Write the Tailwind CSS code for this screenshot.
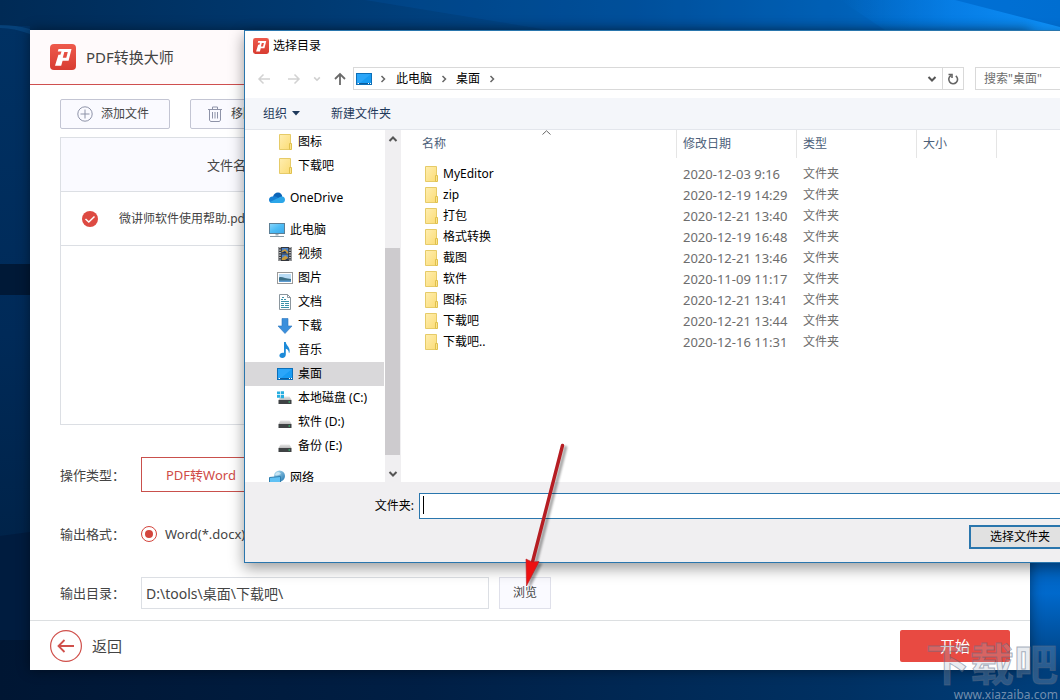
<!DOCTYPE html>
<html lang="zh-CN">
<head>
<meta charset="utf-8">
<meta name="viewport" content="width=device-width, initial-scale=1">
<title>PDF转换大师</title>
<script src="https://cdn.jsdelivr.net/npm/@tailwindcss/browser@4"></script>
</head>
<body class="relative h-screen overflow-hidden bg-[#002550] font-['Noto_Sans','Noto_Sans_CJK_SC',sans-serif] text-[12px] leading-[16px] text-[#444]">

<!-- shared icons -->
<svg class="absolute size-0" aria-hidden="true">
  <defs>
    <linearGradient id="gFolder" x1="0" y1="0" x2="1" y2="1"><stop offset="0" stop-color="#ffeeb0"/><stop offset="1" stop-color="#fbdc76"/></linearGradient>
    <linearGradient id="gLogo" x1="0" y1="0" x2="0" y2="1"><stop offset="0" stop-color="#ee5a4c"/><stop offset="1" stop-color="#d83c31"/></linearGradient>
    <linearGradient id="gScreen" x1="0" y1="0" x2="1" y2="1"><stop offset="0" stop-color="#8ad6fb"/><stop offset=".5" stop-color="#4dbcf5"/><stop offset="1" stop-color="#3aa8ea"/></linearGradient>
    <linearGradient id="gDisk" x1="0" y1="0" x2="0" y2="1"><stop offset="0" stop-color="#e6e6e6"/><stop offset="1" stop-color="#bcbcbc"/></linearGradient>
    <linearGradient id="gGlobe" x1="0" y1="0" x2="1" y2="1"><stop offset="0" stop-color="#b8e3f5"/><stop offset="1" stop-color="#2277b0"/></linearGradient>
  </defs>
  <symbol id="logo" viewBox="0 0 26 26">
    <rect width="26" height="26" rx="4" fill="url(#gLogo)"/>
    <path d="M8.500 5H21.500L18.600 16.800H12.600L11.200 21.800H5L8.400 10.800H10.400L11.500 7.600H7.800ZM12.800 13.800H16.300L17.800 8H14.300Z" fill="#fff" fill-rule="evenodd"/>
  </symbol>
  <symbol id="folder" viewBox="0 0 16 16">
    <path d="M2.500.500H13.500V15.500H2.500Z" fill="url(#gFolder)" stroke="#e6cb68"/>
    <path d="M12.500 9.500H14.500V15.500H12.500Z" fill="#fbe48e" stroke="#e0c04c"/>
  </symbol>
  <symbol id="onedrive" viewBox="0 0 16 16">
    <path d="M4 7C4.500 4 6.500 2.500 9 2.500C11.500 2.500 13 4.500 13.300 6.500L9 10Z" fill="#0a64b8"/>
    <path d="M3.500 6.500C6 5.700 8 7 9.500 8L6 13H3.500C1 13 0 11.500 0 9.800C0 8 1.300 6.700 3.500 6.500Z" fill="#1680d4"/>
    <path d="M13 6.500C15 6.600 16 8 16 9.800C16 11.800 14.800 13 13 13H3.500C2.500 13 1.500 12.600 1 12L10 7.500C11 6.800 12 6.500 13 6.500Z" fill="#2ca6e8"/>
  </symbol>
  <symbol id="pc" viewBox="0 0 16 16">
    <rect x=".5" y="1.500" width="15" height="10" fill="url(#gScreen)" stroke="#5d7f95"/>
    <path d="M6.500 12H9.500V13.500H6.500Z" fill="#9eb0bb"/>
    <path d="M1 14.500H15" stroke="#8798a3"/>
  </symbol>
  <symbol id="video" viewBox="0 0 16 16">
    <rect x="1.500" y="1" width="13" height="14" fill="#33363b"/>
    <path d="M3 1V15M13 1V15" stroke="#e8e8e8" stroke-width="1.400" stroke-dasharray="1.300 1.200"/>
    <path d="M4.800 2H11.200V7.500H4.800ZM4.800 8.500H11.200V14H4.800Z" fill="#4d83c9"/>
    <path d="M4.800 5L8 3L11.200 6V7.500H4.800ZM5 12L8.500 9.500L11.200 12V14H4.800Z" fill="#c99b3a"/>
    <path d="M4.800 6.500L8 5L10 7.500H4.800ZM8 14L11.200 12V14Z" fill="#16336a"/>
  </symbol>
  <symbol id="image" viewBox="0 0 16 16">
    <rect x=".5" y="2.500" width="15" height="11" fill="#fff" stroke="#9a9a9a"/>
    <path d="M2 4H14V12H2Z" fill="#b9dcf5"/>
    <path d="M2 7.500C5 6 8 9 14 9V12H2Z" fill="#3c6f86"/><path d="M2 10.500H14V12H2Z" fill="#5e9cd0"/>
  </symbol>
  <symbol id="doc" viewBox="0 0 16 16">
    <path d="M2.500.500H10.500L13.500 3.500V15.500H2.500Z" fill="#fff" stroke="#8b969e"/>
    <path d="M10.500.500V3.500H13.500" fill="none" stroke="#8b969e"/>
    <path d="M4 5.500H6M7 5.500H9M4 7.500H12M8 9.500H12M4 9.500H7M4 11.500H7M8 11.500H12M4 13.500H12M5 3.500H7" stroke="#3c91a8"/>
  </symbol>
  <symbol id="down" viewBox="0 0 16 16">
    <path d="M5 .500H11V8H15L8 15.500L1 8H5Z" fill="#3a8fdc" stroke="#2b76bd" stroke-width=".6"/>
  </symbol>
  <symbol id="music" viewBox="0 0 16 16">
    <path d="M7 0H8.800C8.800 3.500 13.800 5 12.500 10.800H11.800C11.800 8.800 10.800 7.200 8.800 6.800V12.500C8.800 14.800 7.300 16 5.300 16C3.500 16 2.400 15 2.400 13.500C2.400 11.500 4.800 10.200 7 10.800Z" fill="#1c8ad8"/>
  </symbol>
  <symbol id="desktop" viewBox="0 0 16 16">
    <rect x=".5" y="2.500" width="15" height="11" fill="#189cf3" stroke="#0c6fb8"/>
    <path d="M1 3H15L4 12H1Z" fill="#3dafff" opacity=".5"/>
    <path d="M1 12.500H15" stroke="#0b5d9e"/><path d="M1.500 12.500H3M12 12.500H13M14 12.500H15" stroke="#fff"/>
  </symbol>
  <symbol id="disk" viewBox="0 0 16 16">
    <path d="M3.500 6.500H12.500L14.500 10H1.500Z" fill="url(#gDisk)"/>
    <rect x="1.500" y="10" width="13" height="4" fill="#3f4244"/><rect x="11.500" y="11.500" width="1.500" height="1" fill="#3be07c"/>
  </symbol>
  <symbol id="diskwin" viewBox="0 0 16 16">
    <use href="#disk"/>
    <path d="M0 1.500H3V4.300H0ZM3.700 1.300H7V4.300H3.700ZM0 5H3V7.800H0ZM3.700 5H7V8.200H3.700Z" fill="#27aee0"/>
  </symbol>
  <symbol id="network" viewBox="0 0 16 16">
    <circle cx="10.500" cy="6" r="5.500" fill="url(#gGlobe)"/>
    <path d="M7 3C9 1 11 2 12 4C10 5 8 6 6 5Z" fill="#e1f4fb" opacity=".7"/>
    <path d="M.5 7.500L11.500 6.500V13.500L.5 14.500Z" fill="#5fc1f4" stroke="#2e7fb0"/>
    <path d="M3 16H9" stroke="#8798a3"/>
  </symbol>
  <symbol id="chev" viewBox="0 0 10 10"><path d="M1.500 3L5 6.500L8.500 3" fill="none" stroke="currentColor" stroke-width="2"/></symbol>
  <symbol id="sep" viewBox="0 0 10 10"><path d="M3.500 2L6.500 5L3.500 8" fill="none" stroke="currentColor" stroke-width="1.500"/></symbol>
</svg>

<!-- desktop wallpaper -->
<svg class="absolute inset-0 size-full" viewBox="0 0 1060 700" preserveAspectRatio="none" aria-hidden="true">
  <defs>
    <linearGradient id="wTop"><stop offset="0" stop-color="#002a55"/><stop offset=".3" stop-color="#003a72"/><stop offset=".6" stop-color="#004c94"/><stop offset=".8" stop-color="#0062b8"/><stop offset=".9" stop-color="#0074dc"/><stop offset="1" stop-color="#0072d8"/></linearGradient>
    <linearGradient id="wLeft" x1="0" y1="0" x2="0" y2="1"><stop offset="0" stop-color="#003163"/><stop offset=".6" stop-color="#002a58"/><stop offset="1" stop-color="#002349"/></linearGradient>
    <linearGradient id="wBot"><stop offset="0" stop-color="#001633"/><stop offset=".4" stop-color="#001f45"/><stop offset=".8" stop-color="#003163"/><stop offset="1" stop-color="#003f7c"/></linearGradient>
    <linearGradient id="wRight" x1="0" y1="0" x2="0" y2="1"><stop offset="0" stop-color="#0060ba"/><stop offset=".3" stop-color="#0069cc"/><stop offset="1" stop-color="#003f7c"/></linearGradient>
    <linearGradient id="wRay"><stop offset="0" stop-color="#0a84f0" stop-opacity="0"/><stop offset="1" stop-color="#0f92fa"/></linearGradient>
  </defs>
  <rect width="1060" height="80" fill="url(#wTop)"/>
  <path d="M365 0L560 32H1060V0Z" fill="#0060b8" opacity=".2"/>
  <path d="M840 0H955L1060 27V40H900Z" fill="url(#wRay)"/>
  <rect y="26" width="30" height="514" fill="url(#wLeft)"/>
  <path d="M0 25Q16 25 30 29V34Q14 28 0 28Z" fill="#0a4c88" opacity=".6"/>
  <rect y="264" width="30" height="31" fill="#001937"/>
  <path d="M0 536L30 532V700H0Z" fill="#001c3f"/>
  <rect y="640" width="1060" height="60" fill="url(#wBot)"/>
  <rect x="1030" y="560" width="30" height="110" fill="url(#wRight)"/>
</svg>

<!-- main application window -->
<main class="absolute inset-[30px] flex flex-col bg-white shadow-[0_0_12px_rgba(0,0,0,0.45)]">
  <header class="flex h-[55px] shrink-0 items-center gap-2.5 border-b border-[#cf4f4f] bg-[#fffafb] px-5">
    <svg class="size-[26px]" aria-hidden="true"><use href="#logo"/></svg>
    <h1 class="text-[15px] leading-5">PDF转换大师</h1>
  </header>
  <div class="flex min-h-0 flex-1 flex-col px-[30px] pt-[14px] pb-[11px]">
    <div class="flex gap-5">
      <button class="flex h-[30px] w-[110px] items-center justify-center gap-2 rounded-xs border border-[#c3c5d3] bg-[#fafaff] pr-1">
        <svg class="size-4" viewBox="0 0 16 16" fill="none" stroke="#8e93a8" aria-hidden="true"><circle cx="8" cy="8" r="7.200"/><path d="M8 3.500V12.500M3.500 8H12.500"/></svg>
        添加文件
      </button>
      <button class="flex h-[30px] w-[110px] items-center justify-center gap-2 rounded-xs border border-[#c3c5d3] bg-[#fafaff] pr-1">
        <svg class="size-4" viewBox="0 0 16 16" fill="none" stroke="#8e93a8" aria-hidden="true"><path d="M1 3.500H15M5.500 3V1H10.500V3M2.500 4V14L3.500 15.500H12.500L13.500 14V4M5.500 6V12.500M8 6V12.500M10.500 6V12.500"/></svg>
        移除文件
      </button>
    </div>
    <div class="mt-2 min-h-0 flex-1 border border-[#dcdfe4]">
      <table class="w-full table-fixed border-separate border-spacing-0 text-left">
        <colgroup><col class="w-[58px]"><col class="w-[286px]"><col></colgroup>
        <thead>
          <tr class="h-[54px] bg-[#fafaff]">
            <th colspan="2" class="border-b border-[#dcdfe4] text-center text-[13px] font-normal">文件名称</th>
            <th class="border-b border-[#dcdfe4]"></th>
          </tr>
        </thead>
        <tbody>
          <tr class="h-[54px]">
            <td class="border-b border-[#dcdfe4]">
              <label class="relative ml-[21px] block size-4">
                <input type="checkbox" checked aria-label="选择文件" class="block size-4 appearance-none rounded-full bg-[#dd4a42]">
                <svg class="absolute inset-0 size-4" viewBox="0 0 16 16" fill="none" stroke="#fff" stroke-width="1.500" aria-hidden="true"><path d="M3.500 8L6.800 11L12.500 5.500"/></svg>
              </label>
            </td>
            <td class="border-b border-[#dcdfe4]">微讲师软件使用帮助.pdf</td>
            <td class="border-b border-[#dcdfe4]"></td>
          </tr>
        </tbody>
      </table>
    </div>
    <div class="mt-8 flex h-[35px] items-center text-[13px]">
      <span class="w-[81px]">操作类型：</span>
      <button class="h-full border border-[#c9504c] px-6 text-[#cf4b47]">PDF转Word</button>
    </div>
    <div class="mt-[26px] flex h-8 items-center text-[13px]">
      <span class="w-[81px]">输出格式：</span>
      <label class="flex items-center gap-2">
        <input type="radio" name="format" checked class="size-4 appearance-none rounded-full border border-[#d3453d] bg-[#d3453d] bg-clip-content p-[3px]">
        Word(*.docx)
      </label>
    </div>
    <div class="mt-[27px] flex h-8 items-center text-[13px]">
      <label for="outdir" class="w-[81px]">输出目录：</label>
      <input id="outdir" type="text" value="D:\tools\桌面\下载吧\" class="h-full w-[348px] border border-[#dcdfe4] px-1 text-[14px]">
      <button class="ml-2.5 h-full w-[52px] border border-[#dfe0ea] bg-[#fafaff] text-[12px]">浏览</button>
    </div>
  </div>
  <footer class="flex h-[50px] shrink-0 items-center justify-between border-t border-[#dcdfe1] px-5 text-[15px]">
    <button class="flex items-center gap-2.5">
      <svg class="size-8" viewBox="0 0 32 32" fill="none" stroke="#d0504b" aria-hidden="true"><circle cx="16" cy="16" r="15.400" stroke-width="1.200"/><path d="M24 16H9M14.500 10L8.500 16L14.500 22" stroke-width="1.800"/></svg>
      返回
    </button>
    <button class="h-8 w-[110px] rounded-xs bg-[#e84a42] text-white">开始</button>
  </footer>
</main>

<!-- folder picker dialog -->
<section role="dialog" aria-label="选择目录" class="absolute top-[30px] -right-[26px] left-[244px] flex flex-col border border-[#2a76ad] bg-white text-black shadow-[0_5px_14px_rgba(0,0,0,0.4)]">
  <div class="flex h-[30px] items-center gap-1 px-2">
    <svg class="size-4" aria-hidden="true"><use href="#logo"/></svg>
    <h2>选择目录</h2>
  </div>
  <div class="flex items-center pt-[6px] pr-[14px] pb-2 pl-3">
    <button aria-label="后退" class="text-[#d2d2d2]"><svg class="size-[14px]" viewBox="0 0 14 14" fill="none" stroke="currentColor" stroke-width="1.500"><path d="M13 7H2M6.500 2.500L2 7L6.500 11.500"/></svg></button>
    <button aria-label="前进" class="ml-4 text-[#d2d2d2]"><svg class="size-[14px]" viewBox="0 0 14 14" fill="none" stroke="currentColor" stroke-width="1.500"><path d="M1 7H12M7.500 2.500L12 7L7.500 11.500"/></svg></button>
    <button aria-label="最近位置" class="ml-3 text-[#cfcfcf]"><svg class="size-2"><use href="#chev"/></svg></button>
    <button aria-label="上移" class="ml-3 text-[#6a6a6a]"><svg class="size-[14px]" viewBox="0 0 14 14" fill="none" stroke="currentColor" stroke-width="1.800"><path d="M7 13V2M2 7L7 2L12 7"/></svg></button>
    <div class="ml-[6px] flex h-[23px] flex-1 items-center border border-[#d9d9d9]">
      <svg class="ml-[2px] size-4" aria-hidden="true"><use href="#desktop"/></svg>
      <svg class="ml-[6px] size-2.5 text-[#666]" aria-hidden="true"><use href="#sep"/></svg>
      <button class="ml-2">此电脑</button>
      <svg class="ml-[7px] size-2.5 text-[#666]" aria-hidden="true"><use href="#sep"/></svg>
      <button class="ml-[7px]">桌面</button>
      <svg class="ml-[7px] size-2.5 text-[#666]" aria-hidden="true"><use href="#sep"/></svg>
      <button aria-label="以前的位置" class="mr-[5px] ml-auto text-[#555]"><svg class="size-2.5"><use href="#chev"/></svg></button>
      <button aria-label="刷新" class="flex h-full w-[21px] items-center justify-center border-l border-[#d9d9d9] text-[#666]"><svg class="size-3" viewBox="0 0 12 12" fill="none" stroke="currentColor" stroke-width="1.600"><path d="M8.800 2.800A4.400 4.400 0 1 1 4 2.500"/><path d="M1.500 1.500H5V5"/></svg></button>
    </div>
    <input type="search" aria-label="搜索" placeholder='搜索"桌面"' class="ml-[11px] h-[23px] w-24 border border-[#d9d9d9] px-2 placeholder:text-[#6d6d6d]">
  </div>
  <div class="flex h-8 items-center border-b border-[#e3e6ec] bg-[#f4f6fa] px-[18px] text-[#1e395b]">
    <button class="flex items-center gap-[5px]">组织 <svg class="h-[5px] w-2" viewBox="0 0 8 5" fill="currentColor" aria-hidden="true"><path d="M0 0H8L4 4.500Z"/></svg></button>
    <button class="ml-[31px]">新建文件夹</button>
  </div>

  <div class="flex h-[352px] overflow-hidden">
    <nav aria-label="文件夹" class="w-[139px] shrink-0 overflow-hidden">
      <a href="#" class="flex h-6 items-center gap-[5px] pl-8"><svg class="size-4"><use href="#folder"/></svg>图标</a>
      <a href="#" class="flex h-6 items-center gap-[5px] pl-8"><svg class="size-4"><use href="#folder"/></svg>下载吧</a>
      <a href="#" class="mt-2 flex h-6 items-center gap-[5px] pl-6"><svg class="size-4"><use href="#onedrive"/></svg>OneDrive</a>
      <a href="#" class="mt-2 flex h-6 items-center gap-[5px] pl-6"><svg class="size-4"><use href="#pc"/></svg>此电脑</a>
      <a href="#" class="flex h-6 items-center gap-[5px] pl-8"><svg class="size-4"><use href="#video"/></svg>视频</a>
      <a href="#" class="flex h-6 items-center gap-[5px] pl-8"><svg class="size-4"><use href="#image"/></svg>图片</a>
      <a href="#" class="flex h-6 items-center gap-[5px] pl-8"><svg class="size-4"><use href="#doc"/></svg>文档</a>
      <a href="#" class="flex h-6 items-center gap-[5px] pl-8"><svg class="size-4"><use href="#down"/></svg>下载</a>
      <a href="#" class="flex h-6 items-center gap-[5px] pl-8"><svg class="size-4"><use href="#music"/></svg>音乐</a>
      <a href="#" aria-current="true" class="flex h-6 items-center gap-[5px] bg-[#d9d8da] pl-8"><svg class="size-4"><use href="#desktop"/></svg>桌面</a>
      <a href="#" class="flex h-6 items-center gap-[5px] pl-8"><svg class="size-4"><use href="#diskwin"/></svg>本地磁盘 (C:)</a>
      <a href="#" class="flex h-6 items-center gap-[5px] pl-8"><svg class="size-4"><use href="#disk"/></svg>软件 (D:)</a>
      <a href="#" class="flex h-6 items-center gap-[5px] pl-8"><svg class="size-4"><use href="#disk"/></svg>备份 (E:)</a>
      <a href="#" class="mt-2 flex h-6 items-center gap-[5px] pl-6"><svg class="size-4"><use href="#network"/></svg>网络</a>
    </nav>
    <div class="ml-px flex w-4 shrink-0 flex-col items-center bg-[#f0eff1] text-[#555]">
      <button aria-label="向上滚动" class="flex h-[18px] items-center"><svg class="size-2.5 rotate-180"><use href="#chev"/></svg></button>
      <div class="mt-[100px] mr-px w-[15px] flex-1 bg-[#cdcbce]"></div>
      <button aria-label="向下滚动" class="mt-2.5 flex h-[17px] items-start"><svg class="mt-1 size-2.5"><use href="#chev"/></svg></button>
    </div>
    <div class="relative ml-px min-w-0 flex-1">
      <svg class="absolute top-0 left-[140px] h-[5px] w-[9px]" viewBox="0 0 9 5" fill="none" stroke="#666" aria-hidden="true"><path d="M.5 4.500L4.500.800L8.500 4.500"/></svg>
      <table class="w-full table-fixed border-separate border-spacing-0 text-left">
        <colgroup><col class="w-[275px]"><col class="w-[120px]"><col class="w-[120px]"><col class="w-[80px]"><col></colgroup>
        <thead>
          <tr class="h-7 text-[#4c607a]">
            <th class="border-r border-[#e5e5e5] pl-5 font-normal">名称</th>
            <th class="border-r border-[#e5e5e5] pl-[6px] font-normal">修改日期</th>
            <th class="border-r border-[#e5e5e5] pl-[6px] font-normal">类型</th>
            <th class="border-r border-[#e5e5e5] pl-[6px] font-normal">大小</th>
            <th></th>
          </tr>
        </thead>
        <tbody id="files" class="text-[#6d6d6d] before:block before:h-[5px]"></tbody>
      </table>
    </div>
  </div>

  <div class="flex flex-col gap-[6px] bg-[#f0eff1] pt-[11px] pr-[14px] pb-[13px]">
    <div class="flex h-[26px] items-center">
      <label for="folder-name" class="w-[174px] pr-[5px] text-right">文件夹:</label>
      <div class="relative h-full flex-1">
        <input id="folder-name" type="text" class="size-full border border-[#2a76ad] bg-white px-1">
        <span class="absolute top-[3px] left-1 h-[18px] w-px bg-black"></span>
      </div>
    </div>
    <button class="h-6 w-[102px] self-end border-2 border-[#2a76ad] bg-[#e1e1e1]">选择文件夹</button>
  </div>
</section>

<!-- pointer arrow -->
<svg class="pointer-events-none absolute top-[440px] left-[510px] h-[155px] w-[70px] drop-shadow-[3px_2px_1px_rgba(0,0,0,0.35)]" viewBox="0 0 70 155" aria-hidden="true">
  <path d="M52.500 5.500L22.500 122" stroke="#b51d22" stroke-width="3.400" stroke-linecap="round"/>
  <path d="M16 119L22 122L29 121.500L16.500 146Z" fill="#ee1111" stroke="#b51d22" stroke-width=".6"/>
</svg>

<!-- site watermark -->
<div class="pointer-events-none absolute right-[2px] bottom-[-3px] flex flex-col items-end">
  <span class="text-[44px] leading-[46px] font-bold text-[#a9b4c4]/25 [-webkit-text-stroke:1px_rgba(90,105,130,0.5)]">下载吧</span>
  <span class="text-[12px] leading-[16px] text-[#8fa3bd]/80">www.xiazaiba.com</span>
</div>

<script>
  const files = [
    ['MyEditor', '2020-12-03 9:16'], ['zip', '2020-12-19 14:29'], ['打包', '2020-12-21 13:40'],
    ['格式转换', '2020-12-19 16:48'], ['截图', '2020-12-21 13:46'], ['软件', '2020-11-09 11:17'],
    ['图标', '2020-12-21 13:41'], ['下载吧', '2020-12-21 13:44'], ['下载吧..', '2020-12-16 11:31']
  ];
  document.getElementById('files').innerHTML = files.map(([name, date]) => `
    <tr class="h-[21px]">
      <td class="pl-[21px] text-black"><div class="flex items-center gap-1"><svg class="size-4"><use href="#folder"/></svg>${name}</div></td>
      <td class="pl-[6px] text-[13px]">${date}</td>
      <td class="pl-[6px]">文件夹</td>
      <td></td><td></td>
    </tr>`).join('');
</script>
</body>
</html>
